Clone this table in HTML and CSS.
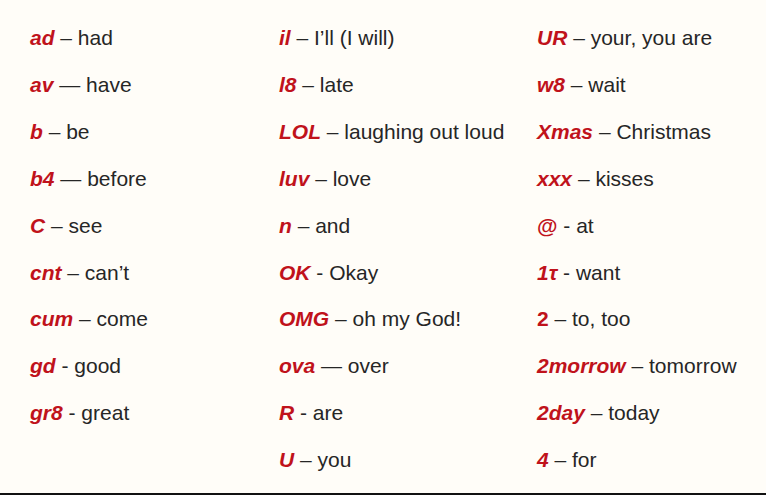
FILE: index.html
```html
<!DOCTYPE html>
<html lang="en">
<head>
<meta charset="utf-8">
<title>Text abbreviations</title>
<link rel="stylesheet" href="styles.css">
</head>
<body>
<main class="sheet">
  <ul class="col col-1">
    <li><b>ad</b> – had</li>
    <li><b>av</b> — have</li>
    <li><b>b</b> – be</li>
    <li><b>b4</b> — before</li>
    <li><b>C</b> – see</li>
    <li><b>cnt</b> – can’t</li>
    <li><b>cum</b> – come</li>
    <li><b>gd</b> - good</li>
    <li><b>gr8</b> - great</li>
  </ul>
  <ul class="col col-2">
    <li><b>il</b> – I’ll (I will)</li>
    <li><b>l8</b> – late</li>
    <li><b>LOL</b> – laughing out loud</li>
    <li><b>luv</b> – love</li>
    <li><b>n</b> – and</li>
    <li><b>OK</b> - Okay</li>
    <li><b>OMG</b> – oh my God!</li>
    <li><b>ova</b> — over</li>
    <li><b>R</b> - are</li>
    <li><b>U</b> – you</li>
  </ul>
  <ul class="col col-3">
    <li><b>UR</b> – your, you are</li>
    <li><b>w8</b> – wait</li>
    <li><b>Xmas</b> – Christmas</li>
    <li><b>xxx</b> – kisses</li>
    <li><b class="up">@</b> - at</li>
    <li><b>1τ</b> - want</li>
    <li><b class="up">2</b> – to, too</li>
    <li><b>2morrow</b> – tomorrow</li>
    <li><b>2day</b> – today</li>
    <li><b>4</b> – for</li>
  </ul>
</main>
</body>
</html>
```

FILE: styles.css
```css
html, body {
  margin: 0;
  padding: 0;
}
body {
  background: #fffdf8;
  font-family: "Liberation Sans", Arial, sans-serif;
  color: #262626;
}
.sheet {
  box-sizing: border-box;
  height: 495px;
  border-bottom: 2px solid #111;
  display: grid;
  grid-template-columns: 249px 258px 1fr;
  padding: 15px 0 0 30px;
}
.col {
  list-style: none;
  margin: 0;
  padding: 0;
}
.col li {
  font-size: 21px;
  line-height: 46.9px;
  white-space: nowrap;
}
.col b {
  color: #c0121b;
  font-weight: bold;
  font-style: italic;
}
.col b.up {
  font-style: normal;
}
```
